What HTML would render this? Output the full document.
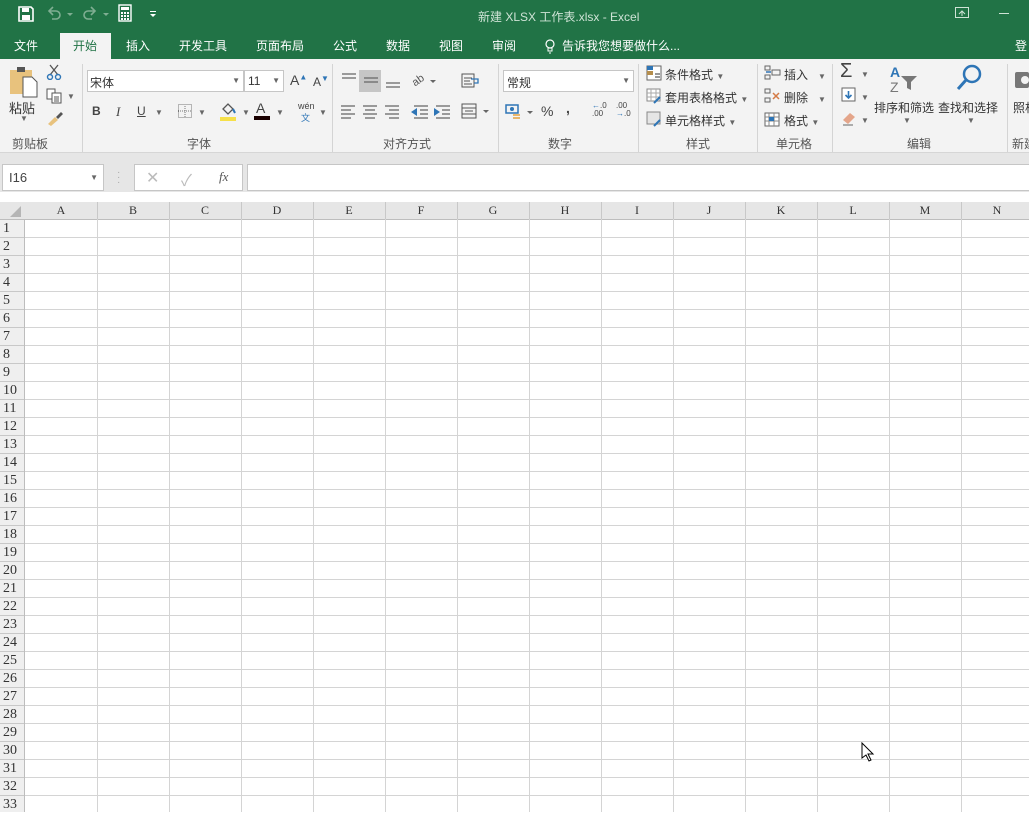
<!DOCTYPE html>
<html><head><meta charset="utf-8">
<style>
*{margin:0;padding:0;box-sizing:border-box}
body{width:1029px;height:812px;overflow:hidden;position:relative;background:#fff;font-family:"Liberation Sans","Noto Sans CJK SC",sans-serif;font-size:12px;color:#444}
.a{position:absolute;white-space:nowrap}
.g{background:#217346}
.tab{position:absolute;top:37px;color:#fff;font-size:12px;white-space:nowrap}
.grp{position:absolute;top:135px;color:#555;font-size:12px;white-space:nowrap}
.sep{position:absolute;top:64px;width:1px;height:88px;background:#d4d4d4}
.ic{position:absolute}
.col{position:absolute;top:203px;font-family:"Liberation Serif",serif;font-size:12px;color:#333;width:72px;text-align:center}
.row{position:absolute;left:0;width:25px;padding-left:3px;text-align:left;font-family:"Liberation Serif",serif;font-size:14px;line-height:17px;color:#333}
.dd{font-size:8px;color:#666}
</style></head><body>
<div class="a g" style="left:0;top:0;width:1029px;height:59px"></div>
<svg class="ic" style="left:17px;top:5px" width="18" height="18" viewBox="0 0 18 18"><path d="M2 2h12l2 2v12H2z" fill="none" stroke="#fff" stroke-width="1.6"/><rect x="5" y="3" width="7" height="4" fill="#fff"/><rect x="5" y="10" width="8" height="5" fill="#fff"/></svg>
<svg class="ic" style="left:46px;top:5px" width="30" height="16"><path d="M4 6h6a4 4 0 0 1 0 8H6" fill="none" stroke="#7fae92" stroke-width="1.6"/><path d="M7 2L3 6l4 4" fill="none" stroke="#7fae92" stroke-width="1.6"/><path d="M21 8l3 3 3-3z" fill="#7fae92"/></svg>
<svg class="ic" style="left:82px;top:5px" width="30" height="16"><path d="M12 6H6a4 4 0 0 0 0 8h4" fill="none" stroke="#7fae92" stroke-width="1.6"/><path d="M9 2l4 4-4 4" fill="none" stroke="#7fae92" stroke-width="1.6"/><path d="M21 8l3 3 3-3z" fill="#7fae92"/></svg>
<svg class="ic" style="left:118px;top:4px" width="16" height="18"><rect x="1" y="1" width="12" height="16" fill="none" stroke="#fff" stroke-width="1.4"/><rect x="3" y="3" width="8" height="3" fill="#fff"/><g fill="#fff"><rect x="3" y="8" width="2" height="2"/><rect x="6" y="8" width="2" height="2"/><rect x="9" y="8" width="2" height="2"/><rect x="3" y="11" width="2" height="2"/><rect x="6" y="11" width="2" height="2"/><rect x="9" y="11" width="2" height="2"/><rect x="3" y="14" width="2" height="2"/><rect x="6" y="14" width="2" height="2"/><rect x="9" y="14" width="2" height="2"/></g></svg>
<svg class="ic" style="left:149px;top:11px" width="8" height="8"><rect x="1" y="0" width="6" height="1" fill="#fff"/><path d="M1 3h6l-3 3z" fill="#fff"/></svg>
<div class="a" style="left:478px;top:8px;color:#cfe3d6;font-size:12px">新建 XLSX 工作表.xlsx - Excel</div>
<svg class="ic" style="left:955px;top:7px" width="14" height="12"><rect x="0.5" y="0.5" width="13" height="10" fill="none" stroke="#cfe3d6"/><path d="M4 7l3-3 3 3M7 4v5" stroke="#cfe3d6" fill="none"/></svg>
<div class="a" style="left:999px;top:13px;width:10px;height:1px;background:#cfe3d6"></div>
<div class="a" style="left:60px;top:33px;width:51px;height:27px;background:#f3f3f3"></div>
<div class="tab" style="left:14px">文件</div>
<div class="tab" style="left:73px;color:#217346">开始</div>
<div class="tab" style="left:126px">插入</div>
<div class="tab" style="left:179px">开发工具</div>
<div class="tab" style="left:256px">页面布局</div>
<div class="tab" style="left:333px">公式</div>
<div class="tab" style="left:386px">数据</div>
<div class="tab" style="left:439px">视图</div>
<div class="tab" style="left:492px">审阅</div>
<svg class="ic" style="left:545px;top:39px" width="10" height="15"><circle cx="5" cy="5" r="4" fill="none" stroke="#fff" stroke-width="1.2"/><path d="M3 9v3h4V9M4 14h2" stroke="#fff" fill="none"/></svg>
<div class="tab" style="left:562px">告诉我您想要做什么...</div>
<div class="tab" style="left:1015px">登</div>
<div class="a" style="left:0;top:59px;width:1029px;height:94px;background:#f3f3f3;border-bottom:1px solid #d6d6d6"></div>
<div class="a" style="left:0;top:153px;width:1029px;height:39px;background:#e6e6e6"></div>
<div class="sep" style="left:82px"></div><div class="sep" style="left:332px"></div><div class="sep" style="left:498px"></div><div class="sep" style="left:638px"></div><div class="sep" style="left:757px"></div><div class="sep" style="left:832px"></div><div class="sep" style="left:1007px"></div>
<svg class="ic" style="left:9px;top:66px" width="30" height="32"><rect x="1" y="4" width="22" height="24" fill="#e8c27d"/><rect x="8" y="1" width="8" height="5" fill="#555"/><path d="M14 11h9l5 5v15H14z" fill="#fff" stroke="#555"/></svg>
<div class="a" style="left:9px;top:98px;font-size:13px;color:#333">粘贴</div>
<div class="a dd" style="left:20px;top:114px">▼</div>
<svg class="ic" style="left:46px;top:64px" width="16" height="16"><path d="M4 1l8 10M12 1L4 11" stroke="#555" stroke-width="1.3"/><circle cx="4" cy="13" r="2.5" fill="none" stroke="#2e75b6" stroke-width="1.4"/><circle cx="12" cy="13" r="2.5" fill="none" stroke="#2e75b6" stroke-width="1.4"/></svg>
<svg class="ic" style="left:46px;top:88px" width="16" height="16"><rect x="1" y="1" width="8" height="10" fill="#fff" stroke="#555"/><rect x="6" y="5" width="9" height="10" fill="#fff" stroke="#555"/><path d="M8 9h5M8 11h5M8 13h5" stroke="#555"/></svg>
<div class="a dd" style="left:67px;top:92px">▼</div>
<svg class="ic" style="left:46px;top:110px" width="18" height="16"><path d="M2 14l7-7 3 3-7 6z" fill="#e8c27d"/><path d="M10 7l5-5 2 2-5 5z" fill="#555"/></svg>
<div class="grp" style="left:12px">剪贴板</div>
<div class="a" style="left:87px;top:70px;width:157px;height:22px;background:#fff;border:1px solid #c6c6c6;padding:3px 2px;color:#333">宋体<span class="dd" style="position:absolute;right:3px;top:5px">▼</span></div>
<div class="a" style="left:244px;top:70px;width:40px;height:22px;background:#fff;border:1px solid #c6c6c6;padding:3px 3px;color:#333">11<span class="dd" style="position:absolute;right:3px;top:5px">▼</span></div>
<div class="a" style="left:290px;top:72px;font-size:14px;color:#444">A<sup style="font-size:8px;color:#2e75b6">▲</sup></div>
<div class="a" style="left:313px;top:74px;font-size:12px;color:#444">A<sup style="font-size:8px;color:#2e75b6">▼</sup></div>
<div class="a" style="left:92px;top:104px;font-weight:bold;color:#444">B</div>
<div class="a" style="left:116px;top:104px;font-style:italic;font-family:'Liberation Serif',serif;font-size:13px">I</div>
<div class="a" style="left:137px;top:104px;text-decoration:underline">U</div>
<div class="a dd" style="left:155px;top:108px">▼</div>
<svg class="ic" style="left:178px;top:104px" width="14" height="14"><rect x="0.5" y="0.5" width="13" height="13" fill="none" stroke="#777" stroke-dasharray="1 1"/><path d="M7 0v14M0 7h14" stroke="#777" stroke-dasharray="1 1"/></svg>
<div class="a dd" style="left:198px;top:108px">▼</div>
<svg class="ic" style="left:219px;top:101px" width="18" height="20"><path d="M4 8l5-5 5 5-5 5z" fill="none" stroke="#555" stroke-width="1.3"/><path d="M14 8l2 4" stroke="#2e75b6" stroke-width="2"/><rect x="1" y="16" width="16" height="4" fill="#f6e049"/></svg>
<div class="a dd" style="left:242px;top:108px">▼</div>
<div class="a" style="left:256px;top:100px;font-size:14px;color:#444">A</div>
<div class="a" style="left:254px;top:116px;width:16px;height:4px;background:#1a0000"></div>
<div class="a dd" style="left:276px;top:108px">▼</div>
<div class="a" style="left:298px;top:101px;font-size:9px;color:#444">wén</div><div class="a" style="left:301px;top:111px;font-size:9px;color:#2e75b6">文</div>
<div class="a dd" style="left:319px;top:108px">▼</div>
<div class="grp" style="left:187px">字体</div>
<div class="a" style="left:359px;top:70px;width:22px;height:22px;background:#c6c6c6"></div>
<svg class="ic" style="left:340px;top:72px" width="120" height="16"><g stroke="#666" stroke-width="1.2"><path d="M2 2h14M2 6h14"/><path d="M24 6h14M24 10h14"/><path d="M46 11h14M46 15h14"/></g><text x="72" y="13" font-size="11" fill="#555" font-family="Liberation Sans" transform="rotate(-35 76 9)">ab</text><path d="M90 8l3 3 3-3z" fill="#666"/></svg>
<svg class="ic" style="left:340px;top:104px" width="110" height="16"><g stroke="#666" stroke-width="1.2"><path d="M1 2h14M1 6h10M1 10h14M1 14h10"/><path d="M23 2h14M25 6h10M23 10h14M25 14h10"/><path d="M45 2h14M49 6h10M45 10h14M49 14h10"/><path d="M74 2h14M80 6h8M80 10h8M74 14h14"/><path d="M96 2h14M102 6h8M102 10h8M96 14h14"/></g><path d="M71 8l6-4v8z" fill="#2e75b6"/><path d="M100 8l-6-4v8z" fill="#2e75b6"/></svg>
<svg class="ic" style="left:461px;top:71px" width="20" height="18"><rect x="1" y="3" width="12" height="13" fill="none" stroke="#555"/><path d="M3 7h8M3 10h6M3 13h8" stroke="#555"/><path d="M10 8h7v4h-4" fill="none" stroke="#2e75b6" stroke-width="1.3"/></svg>
<svg class="ic" style="left:461px;top:103px" width="30" height="16"><rect x="1" y="1" width="14" height="14" fill="none" stroke="#555"/><path d="M1 5h14M1 11h14M4 8h8" stroke="#555"/><path d="M22 7l3 3 3-3z" fill="#666"/></svg>
<div class="grp" style="left:383px">对齐方式</div>
<div class="a" style="left:503px;top:70px;width:131px;height:22px;background:#fff;border:1px solid #c6c6c6;padding:3px 3px;color:#333">常规<span class="dd" style="position:absolute;right:3px;top:5px">▼</span></div>
<svg class="ic" style="left:505px;top:104px" width="30" height="16"><rect x="1" y="1" width="12" height="8" fill="none" stroke="#2e75b6" stroke-width="1.5"/><circle cx="7" cy="5" r="2" fill="#2e75b6"/><path d="M8 11h7M8 14h7" stroke="#e8a23d" stroke-width="1.5"/><path d="M22 7l3 3 3-3z" fill="#666"/></svg>
<div class="a" style="left:541px;top:103px;font-size:14px;color:#444">%</div>
<div class="a" style="left:566px;top:100px;font-size:14px;font-weight:bold;color:#444">,</div>
<div class="a" style="left:592px;top:102px;font-size:8px;line-height:8px;color:#444"><span style="color:#2e75b6">←</span>.0<br>.00</div>
<div class="a" style="left:616px;top:102px;font-size:8px;line-height:8px;color:#444">.00<br><span style="color:#2e75b6">→</span>.0</div>
<div class="grp" style="left:548px">数字</div>
<svg class="ic" style="left:646px;top:65px" width="16" height="16"><rect x="1" y="1" width="14" height="14" fill="#fff" stroke="#666"/><rect x="1" y="1" width="6" height="4" fill="#2e75b6"/><rect x="1" y="6" width="6" height="4" fill="#b58e4d"/><path d="M9 9h5M9 12h5" stroke="#333"/></svg>
<div class="a" style="left:665px;top:66px;color:#333">条件格式 <span class="dd">▼</span></div>
<svg class="ic" style="left:646px;top:88px" width="16" height="16"><rect x="1" y="1" width="13" height="12" fill="#fff" stroke="#888"/><path d="M1 5h13M1 9h13M5 1v12M10 1v12" stroke="#aaa"/><path d="M8 15l6-6" stroke="#2e75b6" stroke-width="2"/></svg>
<div class="a" style="left:665px;top:89px;color:#333">套用表格格式 <span class="dd">▼</span></div>
<svg class="ic" style="left:646px;top:111px" width="16" height="16"><rect x="1" y="1" width="13" height="12" fill="#e5e5e5" stroke="#888"/><path d="M8 15l6-6" stroke="#2e75b6" stroke-width="2"/></svg>
<div class="a" style="left:665px;top:112px;color:#333">单元格样式 <span class="dd">▼</span></div>
<div class="grp" style="left:686px">样式</div>
<svg class="ic" style="left:764px;top:65px" width="18" height="16"><rect x="1" y="1" width="5" height="4" fill="none" stroke="#666"/><rect x="1" y="10" width="5" height="4" fill="none" stroke="#666"/><rect x="8" y="5" width="8" height="5" fill="none" stroke="#666"/><path d="M2 7h5" stroke="#2e75b6" stroke-width="1.5"/></svg>
<div class="a" style="left:784px;top:66px;color:#333">插入 &nbsp;&nbsp;<span class="dd">▼</span></div>
<svg class="ic" style="left:764px;top:88px" width="18" height="16"><rect x="1" y="1" width="5" height="4" fill="none" stroke="#666"/><rect x="1" y="10" width="5" height="4" fill="none" stroke="#666"/><path d="M9 5l6 6M15 5l-6 6" stroke="#d47a45" stroke-width="1.5"/></svg>
<div class="a" style="left:784px;top:89px;color:#333">删除 &nbsp;&nbsp;<span class="dd">▼</span></div>
<svg class="ic" style="left:764px;top:110px" width="18" height="18"><rect x="1" y="3" width="14" height="13" fill="#fff" stroke="#666"/><path d="M1 7h14M1 11h14M5 3v13M10 3v13" stroke="#888"/><rect x="5" y="7" width="5" height="4" fill="#2e75b6"/></svg>
<div class="a" style="left:784px;top:112px;color:#333">格式 <span class="dd">▼</span></div>
<div class="grp" style="left:776px">单元格</div>
<div class="a" style="left:840px;top:60px;font-size:20px;color:#444">Σ</div><div class="a dd" style="left:861px;top:70px">▼</div>
<svg class="ic" style="left:841px;top:87px" width="16" height="16"><rect x="1" y="1" width="13" height="13" fill="#fff" stroke="#666"/><path d="M7.5 4v7M4.5 8l3 3 3-3" stroke="#2e75b6" stroke-width="1.6" fill="none"/></svg><div class="a dd" style="left:861px;top:93px">▼</div>
<svg class="ic" style="left:841px;top:110px" width="16" height="16"><path d="M2 10l7-7 5 4-7 7z" fill="#e4a58a"/><path d="M2 15h10" stroke="#666"/></svg><div class="a dd" style="left:861px;top:116px">▼</div>
<div class="a" style="left:890px;top:64px;font-size:14px;color:#2e75b6;font-weight:bold">A</div>
<div class="a" style="left:890px;top:79px;font-size:14px;color:#777">Z</div>
<svg class="ic" style="left:900px;top:74px" width="18" height="18"><path d="M1 2h16l-6 6v8l-4-2V8z" fill="#777"/></svg>
<svg class="ic" style="left:955px;top:64px" width="28" height="28"><circle cx="17" cy="10" r="8" fill="none" stroke="#2e75b6" stroke-width="2.5"/><path d="M11 16l-8 9" stroke="#2e75b6" stroke-width="3"/></svg>
<div class="a" style="left:874px;top:99px;color:#333">排序和筛选</div>
<div class="a" style="left:938px;top:99px;color:#333">查找和选择</div>
<div class="a dd" style="left:903px;top:116px">▼</div><div class="a dd" style="left:967px;top:116px">▼</div>
<div class="grp" style="left:907px">编辑</div>
<svg class="ic" style="left:1015px;top:68px" width="14" height="22"><rect x="0" y="4" width="14" height="16" rx="2" fill="#777"/><circle cx="10" cy="12" r="4" fill="#f3f3f3"/></svg>
<div class="a" style="left:1013px;top:99px;color:#333">照相</div>
<div class="grp" style="left:1012px">新建</div>
<div class="a" style="left:2px;top:164px;width:102px;height:27px;background:#fff;border:1px solid #c6c6c6;padding:5px 6px;font-size:13px;color:#444">I16<span class="dd" style="position:absolute;right:5px;top:8px">▼</span></div>
<div class="a" style="left:117px;top:170px;color:#aaa;font-size:10px;line-height:5px">·<br>·<br>·</div>
<div class="a" style="left:134px;top:164px;width:109px;height:27px;background:#fff;border:1px solid #c6c6c6"></div>
<div class="a" style="left:146px;top:168px;color:#bbb;font-size:16px">✕</div>
<div class="a" style="left:181px;top:167px;color:#bbb;font-size:16px">✓</div>
<div class="a" style="left:219px;top:169px;color:#555;font-family:'Liberation Serif',serif;font-style:italic;font-size:13px">fx</div>
<div class="a" style="left:247px;top:164px;width:790px;height:27px;background:#fff;border:1px solid #c6c6c6"></div>
<div class="a" style="left:0;top:192px;width:1029px;height:10px;background:#fff"></div>
<div class="a" style="left:0;top:202px;width:1029px;height:18px;background:#e6e6e6;border-bottom:1px solid #bdbdbd"></div>
<div class="a" style="left:0;top:220px;width:25px;height:592px;background:#efefef"></div>
<svg class="ic" style="left:9px;top:205px" width="13" height="13"><path d="M12 1v11H1z" fill="#b5b5b5"/></svg>
<div class="a" style="left:25px;top:219px;width:1004px;height:593px;background-image:repeating-linear-gradient(to bottom,transparent 0,transparent 17px,#d4d4d4 17px,#d4d4d4 18px),repeating-linear-gradient(to right,transparent 0,transparent 71px,#d4d4d4 71px,#d4d4d4 72px);background-position:0 1px,1px 0"></div>
<div class="a" style="left:0;top:219px;width:25px;height:593px;background-image:repeating-linear-gradient(to bottom,transparent 0,transparent 17px,#c8c8c8 17px,#c8c8c8 18px);background-position:0 1px;border-right:1px solid #bdbdbd"></div>
<div class="a" style="left:25px;top:202px;width:1004px;height:17px;background-image:repeating-linear-gradient(to right,transparent 0,transparent 71px,#c8c8c8 71px,#c8c8c8 72px);background-position:1px 0"></div>
<div class="col" style="left:25px">A</div><div class="col" style="left:97px">B</div><div class="col" style="left:169px">C</div><div class="col" style="left:241px">D</div><div class="col" style="left:313px">E</div><div class="col" style="left:385px">F</div><div class="col" style="left:457px">G</div><div class="col" style="left:529px">H</div><div class="col" style="left:601px">I</div><div class="col" style="left:673px">J</div><div class="col" style="left:745px">K</div><div class="col" style="left:817px">L</div><div class="col" style="left:889px">M</div><div class="col" style="left:961px">N</div>
<div class="row" style="top:220px">1</div><div class="row" style="top:238px">2</div><div class="row" style="top:256px">3</div><div class="row" style="top:274px">4</div><div class="row" style="top:292px">5</div><div class="row" style="top:310px">6</div><div class="row" style="top:328px">7</div><div class="row" style="top:346px">8</div><div class="row" style="top:364px">9</div><div class="row" style="top:382px">10</div><div class="row" style="top:400px">11</div><div class="row" style="top:418px">12</div><div class="row" style="top:436px">13</div><div class="row" style="top:454px">14</div><div class="row" style="top:472px">15</div><div class="row" style="top:490px">16</div><div class="row" style="top:508px">17</div><div class="row" style="top:526px">18</div><div class="row" style="top:544px">19</div><div class="row" style="top:562px">20</div><div class="row" style="top:580px">21</div><div class="row" style="top:598px">22</div><div class="row" style="top:616px">23</div><div class="row" style="top:634px">24</div><div class="row" style="top:652px">25</div><div class="row" style="top:670px">26</div><div class="row" style="top:688px">27</div><div class="row" style="top:706px">28</div><div class="row" style="top:724px">29</div><div class="row" style="top:742px">30</div><div class="row" style="top:760px">31</div><div class="row" style="top:778px">32</div><div class="row" style="top:796px">33</div>
<svg class="ic" style="left:861px;top:742px" width="14" height="22"><path d="M1 1v15l4-3 3 6 2-1-3-6h5z" fill="#fff" stroke="#000" stroke-width="1"/></svg>
</body></html>
